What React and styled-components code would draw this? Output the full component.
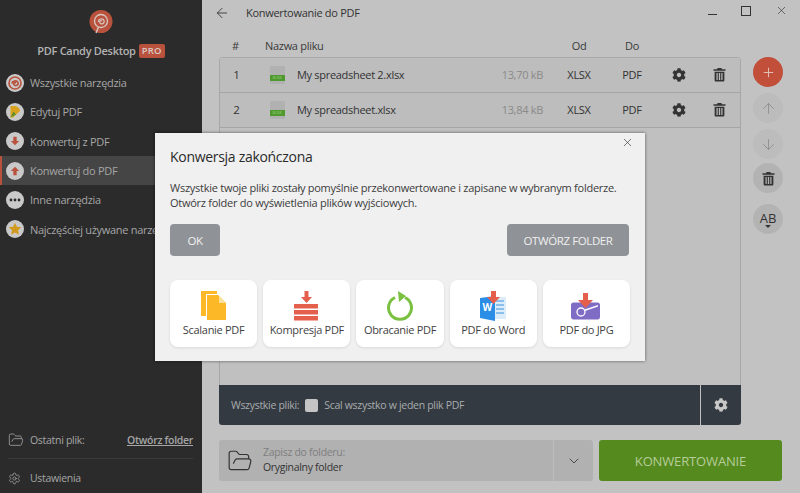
import React from 'react';
import styled, { createGlobalStyle } from 'styled-components';
import { ArrowLeft, ArrowUp, ArrowDown, X, ChevronDown, FolderOpen, Settings, Plus } from 'lucide-react';
import { FaCog } from 'react-icons/fa';

const Global = createGlobalStyle`
  html, body { margin: 0; padding: 0; height: 100%; overflow: hidden; }
  * { box-sizing: border-box; }
  body { font-family: "Open Sans", "Noto Sans", sans-serif; font-size: 11px; letter-spacing: -0.3px; color: #2c2c2c; }
`;

const Shell = styled.div`
  position: relative;
  width: 800px;
  height: 493px;
  display: flex;
  background: #c2c2c2;
  overflow: hidden;
`;

/* sidebar */
const Sidebar = styled.aside`
  width: 202px;
  flex: none;
  background: #2b2b2b;
  display: flex;
  flex-direction: column;
  color: #a6a6a6;
`;

const Brand = styled.div`
  height: 68px;
  padding-top: 10px;
  display: flex;
  flex-direction: column;
  align-items: center;
  gap: 7px;
`;

const BrandName = styled.div`
  display: flex;
  align-items: center;
  gap: 3px;
  font-size: 11px;
  font-weight: 600;
  color: #b3b3b3;
  white-space: nowrap;
`;

const ProBadge = styled.span`
  background: #b9523c;
  color: #d9c8c3;
  font-size: 9.5px;
  font-weight: 600;
  line-height: 14px;
  padding: 0 3px;
  border-radius: 2px;
  letter-spacing: 0.2px;
`;

const Nav = styled.nav`
  display: flex;
  flex-direction: column;
`;

const NavItem = styled.div`
  height: 29.3px;
  display: flex;
  align-items: center;
  gap: 6px;
  padding-left: ${p => (p.$active ? '4px' : '6px')};
  white-space: nowrap;
  background: ${p => (p.$active ? '#454545' : 'transparent')};
  border-left: ${p => (p.$active ? '2px solid #b9523c' : 'none')};
`;

const NavDisc = styled.span`
  width: 18px;
  height: 18px;
  flex: none;
  border-radius: 50%;
  background: #c9c9c9;
  display: flex;
  align-items: center;
  justify-content: center;
`;

const SidebarFoot = styled.div`
  margin-top: auto;
  padding: 0 9px 0 8px;
  display: flex;
  flex-direction: column;
  font-size: 10.5px;
`;

const RecentRow = styled.div`
  height: 37px;
  display: flex;
  align-items: center;
  gap: 6px;
  border-bottom: 1px solid #3b3b3b;
`;

const OpenLink = styled.span`
  margin-left: auto;
  font-weight: 600;
  text-decoration: underline;
  color: #a6a6a6;
`;

const SettingsRow = styled.div`
  height: 34px;
  padding-top: 4px;
  display: flex;
  align-items: center;
  gap: 9px;
`;

/* main column */
const Main = styled.main`
  flex: 1;
  min-width: 0;
  display: flex;
  flex-direction: column;
  padding: 0 18px 12px 17px;
`;

const Header = styled.header`
  height: 25px;
  display: flex;
  align-items: center;
  color: #333;
`;

const BackButton = styled.span`
  width: 32px;
  margin-left: -5px;
  display: flex;
  color: #333;
`;

const WindowButtons = styled.div`
  margin-left: auto;
  margin-right: -6px;
  align-self: flex-start;
  padding-top: 4px;
  display: flex;
  align-items: center;
  gap: 24px;
  color: #333;
`;

const MinimizeLine = styled.span`
  width: 9px;
  height: 1px;
  margin-top: 8px;
  background: #333;
`;

const Workspace = styled.div`
  flex: 1;
  min-height: 0;
  display: flex;
  gap: 11px;
`;

const ListColumn = styled.div`
  width: 522px;
  flex: none;
  display: flex;
  flex-direction: column;
`;

const columns = '33px 44px 1fr 90px 52px 54px 40px 41px';

const HeadRow = styled.div`
  height: 32px;
  padding: 8px 1px 0 0;
  display: grid;
  grid-template-columns: ${columns};
  align-items: center;
  color: #3a3a3a;
`;

const HeadCell = styled.span`
  text-align: ${p => p.$align || 'left'};
  grid-column: ${p => p.$col || 'auto'};
  padding-left: ${p => p.$indent || 0}px;
`;

const TableBox = styled.div`
  flex: 1;
  min-height: 0;
  border: 1px solid #a8a8a8;
  border-bottom: none;
  border-radius: 4px 4px 0 0;
  background: #c0c0c0;
  display: flex;
  flex-direction: column;
`;

const FileRow = styled.div`
  height: 35px;
  flex: none;
  padding-bottom: 1px;
  display: grid;
  grid-template-columns: ${columns};
  align-items: center;
  border-bottom: 1px solid #a5a5a5;
  background: #bdbdbd;
  color: #333;
`;

const Num = styled.span`
  text-align: center;
  font-size: 11.5px;
`;

const FileName = styled.span`
  white-space: nowrap;
`;

const Size = styled.span`
  color: #8a8a8a;
  text-align: right;
  padding-right: 10px;
  white-space: nowrap;
`;

const Ext = styled.span`
  text-align: center;
`;

const IconCell = styled.span`
  display: flex;
  justify-content: center;
  color: #333;
`;

const SheetThumb = styled.span`
  justify-self: center;
  margin-left: 4px;
  position: relative;
  width: 15px;
  height: 18px;
  background: #b1b1b1;
  border-radius: 1px;
`;

const SheetTag = styled.span`
  position: absolute;
  left: 0;
  right: 0;
  bottom: 3px;
  height: 6px;
  background: #4f9a2e;
  color: #a9d394;
  font-size: 4px;
  line-height: 6px;
  letter-spacing: 0;
  text-align: center;
`;

const AllFilesBar = styled.div`
  height: 40px;
  flex: none;
  background: #343a41;
  border-radius: 0 0 3px 3px;
  display: flex;
  align-items: center;
  padding-left: 12px;
  color: #a8abae;
  font-size: 10.5px;
`;

const Checkbox = styled.span`
  width: 13px;
  height: 13px;
  margin: 0 6px;
  background: #c4c4c4;
  border-radius: 2px;
`;

const BarGear = styled.span`
  margin-left: auto;
  width: 41px;
  height: 100%;
  border-left: 1px solid #c0c0c0;
  display: flex;
  align-items: center;
  justify-content: center;
  color: #c8c8c8;
`;

const Rail = styled.div`
  padding-top: 32px;
  margin-left: 1px;
  display: flex;
  flex-direction: column;
  align-items: center;
  width: 30px;
`;

const RailButton = styled.span`
  width: 30px;
  height: 30px;
  margin-bottom: ${p => p.$gap || 6}px;
  border-radius: 50%;
  background: ${p => p.$bg || '#bcbcbc'};
  color: ${p => p.$fg || '#8b8b8b'};
  display: flex;
  align-items: center;
  justify-content: center;
`;

const AbMark = styled.span`
  font-size: 13px;
  line-height: 12px;
  letter-spacing: 0;
  color: #333;
  text-align: center;
  margin-top: 1px;
  &::after {
    content: '';
    display: block;
    margin: 1px auto 0;
    width: 0;
    border: 3px solid transparent;
    border-bottom: none;
    border-top-color: #333;
  }
`;

const Footer = styled.div`
  margin-top: 15px;
  height: 41px;
  flex: none;
  display: flex;
  gap: 6px;
`;

const SavePicker = styled.div`
  width: 374px;
  height: 100%;
  background: #b1b1b1;
  border-radius: 3px;
  display: flex;
  align-items: center;
  padding-left: 8px;
  color: #333;
`;

const SaveText = styled.div`
  margin-left: 10px;
  padding-bottom: 2px;
  display: flex;
  flex-direction: column;
  gap: 1px;
  font-size: 10.5px;
`;

const SaveCaption = styled.span`
  color: #7f7f7f;
`;

const PickerArrow = styled.span`
  margin-left: auto;
  width: 40px;
  height: 100%;
  border-left: 1px solid #bdbdbd;
  display: flex;
  align-items: center;
  justify-content: center;
  color: #444;
`;

const ConvertButton = styled.div`
  width: 183px;
  background: #558a1e;
  color: #b5cd9a;
  border-radius: 3px;
  display: flex;
  align-items: center;
  justify-content: center;
  font-size: 13px;
  font-weight: 500;
  letter-spacing: -0.15px;
`;

/* dialog */
const Dialog = styled.section`
  position: absolute;
  left: 155px;
  top: 133px;
  width: 490px;
  height: 228px;
  background: #f0f0f0;
  box-shadow: 0 0 3px rgba(0, 0, 0, 0.55);
  padding: 14px 15px 0;
`;

const CloseButton = styled.span`
  position: absolute;
  top: 3px;
  right: 11px;
  color: #333;
  display: flex;
`;

const DialogTitle = styled.h2`
  margin: 0;
  font-size: 14px;
  line-height: 19px;
  font-weight: 500;
  color: #2b2b2b;
`;

const DialogText = styled.p`
  margin: 14px 0 0;
  line-height: 15px;
  letter-spacing: -0.26px;
  color: #3c3c3c;
  white-space: nowrap;
`;

const DialogActions = styled.div`
  margin-top: 14px;
  display: flex;
  justify-content: space-between;
`;

const GreyButton = styled.span`
  height: 32px;
  width: ${p => p.$w}px;
  margin-right: 1px;
  border-radius: 4px;
  background: #8f9296;
  color: #f0f0f0;
  display: flex;
  align-items: center;
  justify-content: center;
  font-size: 11.5px;
  font-weight: 500;
  letter-spacing: -0.4px;
`;

const CardRow = styled.div`
  margin-top: 24px;
  display: flex;
  gap: 6px;
`;

const ToolCard = styled.div`
  width: 87.4px;
  height: 67px;
  background: #fff;
  border-radius: 8px;
  box-shadow: 0 1px 3px rgba(0, 0, 0, 0.1);
  display: flex;
  flex-direction: column;
  align-items: center;
  padding-top: 11px;
  color: #3f3f3f;
  white-space: nowrap;
`;

const CardIcon = styled.span`
  height: 31px;
  display: flex;
  align-items: flex-start;
`;

function Trash({ size = 16 }) {
  return (
    <svg width={size} height={size} viewBox="0 0 16 16" fill="currentColor">
      <path d="M6 1h4l.6 1.4H14.4v1.500H1.600V2.400h3.800z" />
      <path fillRule="evenodd" d="M2.800 5h10.400v9c0 .8-.6 1.400-1.400 1.400H4.200c-.8 0-1.400-.6-1.400-1.400zm2 1.400v7.400h1.300V6.400zm2.500 0v7.400h1.400V6.400zm2.600 0v7.400h1.300V6.400z" />
    </svg>
  );
}

function Lollipop() {
  return (
    <svg width="24" height="26" viewBox="0 0 24 26">
      <circle cx="12" cy="11.500" r="11.500" fill="#b9523c" />
      <path d="M7 23l2.500-6" stroke="#d9c8c3" strokeWidth="1.400" />
      <circle cx="12" cy="11" r="6.500" fill="none" stroke="#d9c8c3" strokeWidth="1.300" />
      <path d="M9.500 12c-.5-3 4.500-4.500 5.500-1.500s-3 4.500-4 2.500 1-3 2-2" fill="none" stroke="#d9c8c3" strokeWidth="1.200" />
    </svg>
  );
}

const navIcons = {
  all: (
    <svg width="14" height="14" viewBox="0 0 14 14" fill="none" stroke="#b9523c" strokeWidth="1.600">
      <circle cx="7" cy="7" r="6" />
      <path d="M4 7.500c0-3 5-3.500 6-1s-2.500 4-4 2.300 1-3 2-1.600" />
    </svg>
  ),
  edit: (
    <svg width="12" height="13" viewBox="0 0 12 13">
      <path d="M1.500 1h4c3 0 5.500 2.500 5.500 5L4 12.500H1.500z" fill="#d9a21f" />
      <path d="M1.500 12.500l3-6 2.500 3z" fill="#5d8f2c" />
    </svg>
  ),
  from: (
    <svg width="10" height="10" viewBox="0 0 12 12" fill="#b9523c">
      <path d="M4 1h4v5h3L6 11 1 6h3z" />
    </svg>
  ),
  to: (
    <svg width="10" height="10" viewBox="0 0 12 12" fill="#b9523c">
      <path d="M6 1l5 5H8v5H4V6H1z" />
    </svg>
  ),
  more: (
    <svg width="12" height="4" viewBox="0 0 12 4" fill="#2b2b2b">
      <circle cx="2" cy="2" r="1.400" />
      <circle cx="6" cy="2" r="1.400" />
      <circle cx="10" cy="2" r="1.400" />
    </svg>
  ),
  top: (
    <svg width="14" height="14" viewBox="0 0 14 14" fill="#d29a1c">
      <path d="M7 .8l1.900 4 4.400.5-3.300 3 .9 4.400L7 10.500l-3.900 2.200.9-4.400-3.300-3 4.400-.5z" />
    </svg>
  ),
};

const navItems = [
  { key: 'all', label: 'Wszystkie narzędzia' },
  { key: 'edit', label: 'Edytuj PDF' },
  { key: 'from', label: 'Konwertuj z PDF' },
  { key: 'to', label: 'Konwertuj do PDF', active: true },
  { key: 'more', label: 'Inne narzędzia' },
  { key: 'top', label: 'Najczęściej używane narzędzia' },
];

const files = [
  { id: 1, name: 'My spreadsheet 2.xlsx', size: '13,70 kB' },
  { id: 2, name: 'My spreadsheet.xlsx', size: '13,84 kB' },
];

const tools = [
  {
    label: 'Scalanie PDF',
    icon: (
      <svg width="26" height="30" viewBox="0 0 26 30">
        <path d="M0 0h16v3H5v22H0z" fill="#fcb826" />
        <path d="M6 4h11l8 8v17H6z" fill="#fcb826" />
        <path d="M18 4.500l7 7.500h-7z" fill="#fde09a" />
      </svg>
    ),
  },
  {
    label: 'Kompresja PDF',
    icon: (
      <svg width="25" height="30" viewBox="0 0 25 30" fill="#e4604d">
        <path d="M10.500 0h4v6H18l-5.500 6L7 6h3.500z" />
        <rect y="13" width="24" height="4.500" />
        <rect y="19" width="24" height="4.500" />
        <rect y="25" width="24" height="4.500" />
      </svg>
    ),
  },
  {
    label: 'Obracanie PDF',
    icon: (
      <svg width="28" height="30" viewBox="0 0 28 30" fill="none">
        <path d="M9 6.500a11.500 11.500 0 1 0 10 0" stroke="#7ac142" strokeWidth="3" />
        <path d="M12 0l8 5-7 6z" fill="#7ac142" />
      </svg>
    ),
  },
  {
    label: 'PDF do Word',
    icon: (
      <svg width="27" height="30" viewBox="0 0 27 30">
        <path d="M13 6h13v22H13z" fill="#dcecf9" />
        <path d="M16 10h8M16 14h8M16 18h8M16 22h8" stroke="#3b94e0" strokeWidth="1.200" />
        <path d="M0 7l15-2v25L0 27z" fill="#2b8ee6" />
        <text x="2.500" y="20" fontSize="10" fontWeight="700" fill="#fff" fontFamily="Open Sans">W</text>
        <path d="M11 0h5v6h4l-6.500 7L7 6h4z" fill="#e4604d" />
      </svg>
    ),
  },
  {
    label: 'PDF do JPG',
    icon: (
      <svg width="30" height="30" viewBox="0 0 30 30">
        <path d="M0 14c0-1.500 1-2.500 2.500-2.500h24c1.500 0 2.500 1 2.500 2.500v12c0 1.500-1 2.500-2.500 2.500h-24C1 28.500 0 27.500 0 26z" fill="#7f6cc5" />
        <circle cx="10" cy="21" r="4" fill="#7f6cc5" stroke="#fff" strokeWidth="1.300" />
        <path d="M13.500 18.500L27 14v1.500L14 20z" fill="#fff" />
        <path d="M12 2h5v7h5l-7.500 8L7 9h5z" fill="#e4604d" />
      </svg>
    ),
  },
];

export default function App() {
  return (
    <>
      <Global />
      <Shell>
        <Sidebar>
          <Brand>
            <Lollipop />
            <BrandName>PDF Candy Desktop <ProBadge>PRO</ProBadge></BrandName>
          </Brand>
          <Nav>
            {navItems.map(item => (
              <NavItem key={item.key} $active={item.active}>
                <NavDisc>{navIcons[item.key]}</NavDisc>
                {item.label}
              </NavItem>
            ))}
          </Nav>
          <SidebarFoot>
            <RecentRow>
              <FolderOpen size={16} strokeWidth={1.2} />
              Ostatni plik:
              <OpenLink>Otwórz folder</OpenLink>
            </RecentRow>
            <SettingsRow>
              <Settings size={13} strokeWidth={1.4} />
              Ustawienia
            </SettingsRow>
          </SidebarFoot>
        </Sidebar>

        <Main>
          <Header>
            <BackButton><ArrowLeft size={16} strokeWidth={1.3} /></BackButton>
            Konwertowanie do PDF
            <WindowButtons>
              <MinimizeLine />
              <svg width="10" height="10" viewBox="0 0 10 10" fill="none" stroke="currentColor">
                <rect x=".5" y=".5" width="9" height="9" />
              </svg>
              <X size={13} strokeWidth={1.2} />
            </WindowButtons>
          </Header>

          <Workspace>
            <ListColumn>
              <HeadRow>
                <HeadCell $align="center">#</HeadCell>
                <HeadCell $col="2 / 4" $indent={13}>Nazwa pliku</HeadCell>
                <HeadCell $col="5" $align="center">Od</HeadCell>
                <HeadCell $col="6" $align="center">Do</HeadCell>
              </HeadRow>
              <TableBox>
                {files.map(file => (
                  <FileRow key={file.id}>
                    <Num>{file.id}</Num>
                    <SheetThumb><SheetTag>XLSX</SheetTag></SheetThumb>
                    <FileName>{file.name}</FileName>
                    <Size>{file.size}</Size>
                    <Ext>XLSX</Ext>
                    <Ext>PDF</Ext>
                    <IconCell><FaCog size={14} /></IconCell>
                    <IconCell><Trash size={15} /></IconCell>
                  </FileRow>
                ))}
              </TableBox>
              <AllFilesBar>
                Wszystkie pliki:
                <Checkbox />
                Scal wszystko w jeden plik PDF
                <BarGear><FaCog size={14} /></BarGear>
              </AllFilesBar>
            </ListColumn>

            <Rail>
              <RailButton $bg="#c24f39" $fg="#e2c5bc"><Plus size={15} strokeWidth={1.5} /></RailButton>
              <RailButton><ArrowUp size={17} strokeWidth={1.2} /></RailButton>
              <RailButton $gap={4}><ArrowDown size={17} strokeWidth={1.2} /></RailButton>
              <RailButton $bg="#b3b3b3" $fg="#333" $gap={11}><Trash size={15} /></RailButton>
              <RailButton $bg="#b3b3b3"><AbMark>AB</AbMark></RailButton>
            </Rail>
          </Workspace>

          <Footer>
            <SavePicker>
              <FolderOpen size={26} strokeWidth={1.1} />
              <SaveText>
                <SaveCaption>Zapisz do folderu:</SaveCaption>
                Oryginalny folder
              </SaveText>
              <PickerArrow><ChevronDown size={16} strokeWidth={1.4} /></PickerArrow>
            </SavePicker>
            <ConvertButton>KONWERTOWANIE</ConvertButton>
          </Footer>
        </Main>

        <Dialog>
          <CloseButton><X size={13} strokeWidth={1.2} /></CloseButton>
          <DialogTitle>Konwersja zakończona</DialogTitle>
          <DialogText>
            Wszystkie twoje pliki zostały pomyślnie przekonwertowane i zapisane w wybranym folderze.
            <br />
            Otwórz folder do wyświetlenia plików wyjściowych.
          </DialogText>
          <DialogActions>
            <GreyButton $w={50}>OK</GreyButton>
            <GreyButton $w={122}>OTWÓRZ FOLDER</GreyButton>
          </DialogActions>
          <CardRow>
            {tools.map(tool => (
              <ToolCard key={tool.label}>
                <CardIcon>{tool.icon}</CardIcon>
                {tool.label}
              </ToolCard>
            ))}
          </CardRow>
        </Dialog>
      </Shell>
    </>
  );
}
